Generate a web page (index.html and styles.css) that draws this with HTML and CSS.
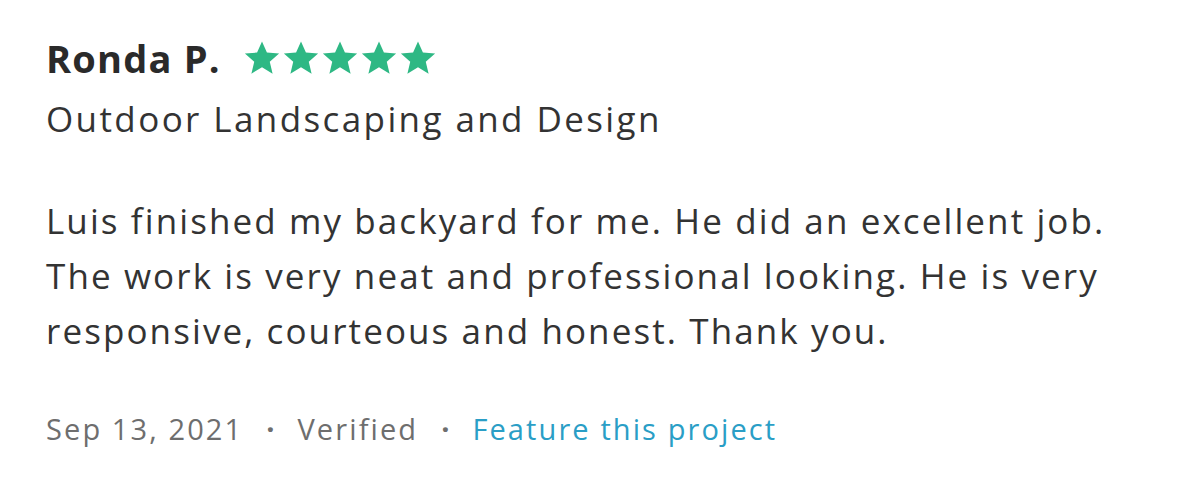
FILE: index.html
```html
<!DOCTYPE html>
<html lang="en">
<head>
  <meta charset="UTF-8" />
  <title>Review - Ronda P.</title>
  <link rel="stylesheet" href="styles.css">
</head>
<body>

  <!-- Review card -->
  <div class="review">
    <div class="review-head">
      <span class="reviewer">Ronda P.</span>
      <span class="stars">
        <svg class="star" viewBox="0 0 24 24"><path d="M12 1.5l3.1 7.1 7.7.6-5.9 5.1 1.8 7.6L12 17.8l-6.7 4.1 1.8-7.6-5.9-5.1 7.7-.6z"/></svg>
        <svg class="star" viewBox="0 0 24 24"><path d="M12 1.5l3.1 7.1 7.7.6-5.9 5.1 1.8 7.6L12 17.8l-6.7 4.1 1.8-7.6-5.9-5.1 7.7-.6z"/></svg>
        <svg class="star" viewBox="0 0 24 24"><path d="M12 1.5l3.1 7.1 7.7.6-5.9 5.1 1.8 7.6L12 17.8l-6.7 4.1 1.8-7.6-5.9-5.1 7.7-.6z"/></svg>
        <svg class="star" viewBox="0 0 24 24"><path d="M12 1.5l3.1 7.1 7.7.6-5.9 5.1 1.8 7.6L12 17.8l-6.7 4.1 1.8-7.6-5.9-5.1 7.7-.6z"/></svg>
        <svg class="star" viewBox="0 0 24 24"><path d="M12 1.5l3.1 7.1 7.7.6-5.9 5.1 1.8 7.6L12 17.8l-6.7 4.1 1.8-7.6-5.9-5.1 7.7-.6z"/></svg>
      </span>
    </div>
    <div class="service">Outdoor Landscaping and Design</div>

    <p class="review-text">
      Luis finished my backyard for me. He did an excellent job.<br>
      The work is very neat and professional looking. He is very<br>
      responsive, courteous and honest. Thank you.
    </p>

    <div class="review-meta">
      <span>Sep 13, 2021</span>
      <span class="dot">·</span>
      <span>Verified</span>
      <span class="dot">·</span>
      <a href="#" class="feature-link">Feature this project</a>
    </div>
  </div>

</body>
</html>
```

FILE: styles.css
```css
body {
  margin: 0;
  font-family: "Open Sans", Lato, sans-serif;
  background: #fff;
  color: #2f2f2f;
}

.review {
  padding: 28px 46px;
}

.review-head {
  display: flex;
  align-items: center;
  gap: 22px;
}

.reviewer {
  font-size: 38px;
  font-weight: 700;
  color: #2a2a2a;
  line-height: 60px;
  letter-spacing: 1.2px;
}

.stars {
  display: flex;
  gap: 1px;
}

.star {
  width: 38px;
  height: 38px;
  fill: #2eb884;
}

.service {
  margin-top: 3px;
  font-size: 35px;
  line-height: 56px;
  color: #333;
  letter-spacing: 2.4px;
}

.review-text {
  font-size: 35px;
  line-height: 55px;
  margin: 46px 0 0;
  color: #333;
  letter-spacing: 2.1px;
}

.review-meta {
  display: flex;
  align-items: center;
  gap: 23px;
  margin-top: 51px;
  font-size: 29px;
  color: #6e6e6e;
  letter-spacing: 2.1px;
}

.dot {
  font-weight: 700;
  letter-spacing: 0;
}

.feature-link {
  color: #2a9ec6;
  text-decoration: none;
}
```
